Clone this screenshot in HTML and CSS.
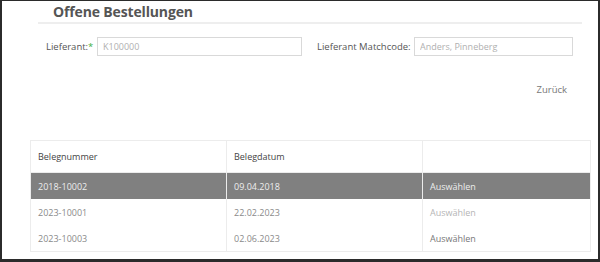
FILE: index.html
```html
<!DOCTYPE html>
<html lang="de">
<head>
<meta charset="utf-8">
<title>Offene Bestellungen</title>
<link rel="stylesheet" href="styles.css">
</head>
<body>
<div class="frame">
  <h1 class="title">Offene Bestellungen</h1>
  <div class="title-rule"></div>
  <div class="filters">
    <label class="label label-first">Lieferant:<span class="req">*</span></label>
    <input class="field field-first" type="text" placeholder="K100000">
    <label class="label label-second">Lieferant Matchcode:</label>
    <input class="field field-second" type="text" placeholder="Anders, Pinneberg">
  </div>
  <div class="actions">
    <a class="back">Zurück</a>
  </div>
  <table class="grid">
    <colgroup>
      <col class="c1"><col class="c2"><col class="c3">
    </colgroup>
    <thead>
      <tr><th>Belegnummer</th><th>Belegdatum</th><th></th></tr>
    </thead>
    <tbody>
      <tr class="selected"><td>2018-10002</td><td>09.04.2018</td><td>Auswählen</td></tr>
      <tr><td>2023-10001</td><td>22.02.2023</td><td class="pick-light">Auswählen</td></tr>
      <tr><td>2023-10003</td><td>02.06.2023</td><td class="pick">Auswählen</td></tr>
    </tbody>
  </table>
</div>
</body>
</html>
```

FILE: styles.css
```css
html, body {
  margin: 0;
  padding: 0;
  background: #ffffff;
}

.frame {
  box-sizing: border-box;
  width: 600px;
  height: 262px;
  border-style: solid;
  border-color: #2b2b2b;
  border-width: 1px 2px 3px 2px;
  font-family: "Open Sans", "Noto Sans", sans-serif;
  overflow: hidden;
}

.title {
  margin: 1px 0 0 51px;
  font-size: 14px;
  line-height: 19px;
  font-weight: 700;
  letter-spacing: -0.15px;
  color: #555555;
}

.title-rule {
  margin: 1px 16px 0 36px;
  border-top: 2px solid #eeeeee;
}

.filters {
  display: flex;
  align-items: center;
  margin-top: 13px;
  padding-left: 44px;
}

.label {
  font-size: 9.5px;
  color: #555555;
  white-space: nowrap;
}

.label-first {
  width: 51px;
}

.req {
  color: #3cb043;
}

.label-second {
  width: 97px;
  margin-left: 15px;
}

.field {
  box-sizing: border-box;
  height: 19px;
  margin: 0;
  padding: 0 5px;
  border: 1px solid #d9d9d9;
  font-family: inherit;
  font-size: 9px;
  color: #555555;
  outline: none;
}

.field::placeholder {
  color: #b0b0b0;
}

.field-first {
  width: 205px;
}

.field-second {
  width: 159px;
}

.actions {
  display: flex;
  justify-content: flex-end;
  margin-top: 27px;
  padding-right: 31px;
}

.back {
  font-size: 9.5px;
  line-height: 14px;
  color: #777777;
}

.grid {
  margin: 43px 0 0 28px;
  width: 560px;
  border-collapse: collapse;
  border: 1px solid #ececec;
  font-size: 9px;
  table-layout: fixed;
}

.c1 { width: 196px; }
.c2 { width: 196px; }
.c3 { width: 168px; }

.grid th,
.grid td {
  text-align: left;
  padding: 0 0 0 7px;
  border-left: 1px solid #ececec;
  white-space: nowrap;
}

.grid th {
  height: 31px;
  font-weight: 400;
  color: #444444;
  border-bottom: 1px solid #ececec;
}

.grid td {
  height: 26px;
  color: #8a8a8a;
}

.grid tr.selected td {
  background: #808080;
  color: #eeeeee;
}

.grid td.pick-light {
  color: #b5b5b5;
}

.grid td.pick {
  color: #777777;
}
```
